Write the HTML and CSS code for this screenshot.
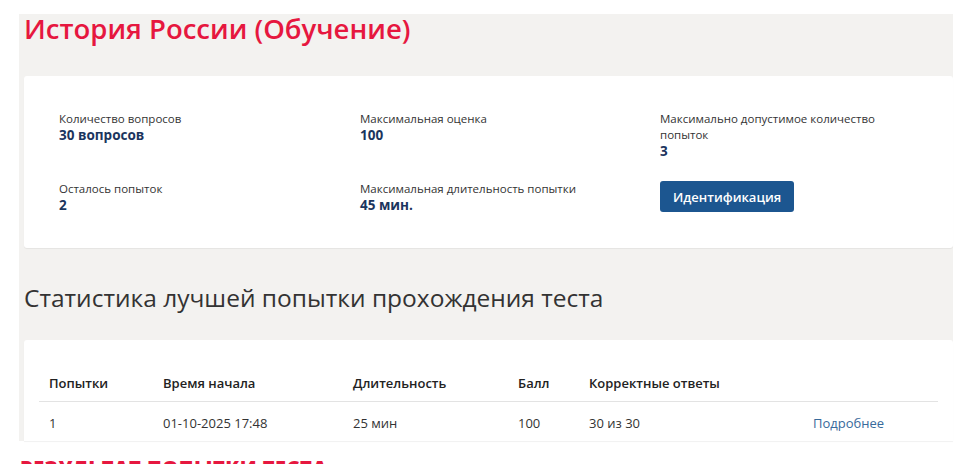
FILE: index.html
```html
<!DOCTYPE html>
<html lang="ru">
<head>
<meta charset="utf-8">
<title>История России (Обучение)</title>
<link rel="stylesheet" href="styles.css">
</head>
<body>
<div class="panel">
  <h1 class="title">История России (Обучение)</h1>
  <section class="card info">
    <div class="grid">
      <div class="item"><div class="label">Количество вопросов</div><div class="value">30 вопросов</div></div>
      <div class="item"><div class="label">Максимальная оценка</div><div class="value">100</div></div>
      <div class="item"><div class="label">Максимально допустимое количество попыток</div><div class="value">3</div></div>
      <div class="item"><div class="label">Осталось попыток</div><div class="value">2</div></div>
      <div class="item"><div class="label">Максимальная длительность попытки</div><div class="value">45 мин.</div></div>
      <div class="item"><button class="btn">Идентификация</button></div>
    </div>
  </section>
  <h2 class="subtitle">Статистика лучшей попытки прохождения теста</h2>
  <section class="card stats">
    <table class="table">
      <colgroup>
        <col class="c1"><col class="c2"><col class="c3"><col class="c4"><col class="c5"><col class="c6">
      </colgroup>
      <thead>
        <tr><th>Попытки</th><th>Время начала</th><th>Длительность</th><th>Балл</th><th>Корректные ответы</th><th></th></tr>
      </thead>
      <tbody>
        <tr><td>1</td><td>01-10-2025 17:48</td><td>25 мин</td><td>100</td><td>30 из 30</td><td><a class="link" href="#">Подробнее</a></td></tr>
      </tbody>
    </table>
  </section>
</div>
<div class="result">РЕЗУЛЬТАТ ПОПЫТКИ ТЕСТА</div>
</body>
</html>
```

FILE: styles.css
```css
* { box-sizing: border-box; }
html, body { margin: 0; padding: 0; background: #ffffff; }
body {
  font-family: "Open Sans", "Noto Sans", sans-serif;
  color: #333;
  width: 976px;
  height: 464px;
  overflow: hidden;
}
.panel {
  margin: 14px 0 0 19px;
  width: 934px;
  height: 427px;
  background: #f3f2f0;
  padding-left: 5px;
}
.title {
  margin: 0;
  font-family: "Open Sans", sans-serif;
  font-weight: 600;
  font-size: 27.5px;
  line-height: 30px;
  color: #e6173f;
}
.card {
  background: #fff;
  border-radius: 3px;
  box-shadow: 0 1px 1px rgba(0,0,0,0.06);
}
.info {
  margin-top: 32px;
  height: 172px;
  padding: 35px 0 0 35px;
}
.grid {
  display: grid;
  grid-template-columns: 301px 300px 232px;
  row-gap: 21px;
  align-items: start;
}
.label {
  font-size: 11.5px;
  line-height: 16px;
  color: #333;
}
.value {
  font-size: 13.5px;
  line-height: 17px;
  font-weight: 700;
  color: #1b355e;
}
.btn {
  display: block;
  height: 31px;
  padding: 0 13px;
  border: none;
  border-radius: 3px;
  background: #1c5690;
  color: #fff;
  font-family: "Open Sans", sans-serif;
  font-size: 13px;
  font-weight: 600;
}
.subtitle {
  margin: 34px 0 0 0;
  font-weight: 400;
  font-size: 24.5px;
  line-height: 32px;
  color: #333;
}
.stats {
  margin-top: 26px;
  padding: 25px 15px 0 15px;
  height: 101px;
  border-radius: 3px 3px 0 0;
  overflow: hidden;
}
.table {
  width: 899px;
  border-collapse: collapse;
  table-layout: fixed;
  font-size: 13px;
}
.c1 { width: 114px; }
.c2 { width: 190px; }
.c3 { width: 165px; }
.c4 { width: 71px; }
.c5 { width: 224px; }
.c6 { width: 135px; }
.table th {
  text-align: left;
  font-weight: 600;
  color: #222;
  padding: 8px 10px;
  line-height: 20px;
  border-bottom: 1px solid #e3e3e3;
}
.table td {
  padding: 11px 10px 9px;
  line-height: 20px;
  color: #333;
}
.link {
  color: #386a9b;
  text-decoration: none;
}
.result {
  margin: 12px 0 0 20px;
  font-family: "Open Sans", sans-serif;
  font-weight: 800;
  font-size: 20px;
  line-height: 30px;
  color: #e6173f;
  letter-spacing: 0.5px;
}
```
